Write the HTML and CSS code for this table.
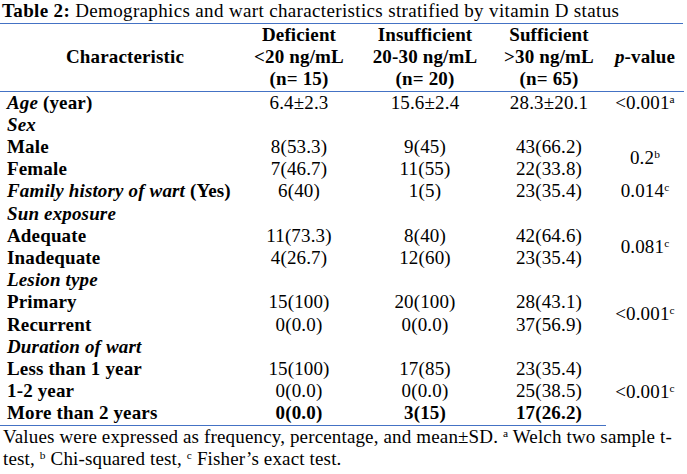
FILE: index.html
```html
<!DOCTYPE html>
<html>
<head>
<meta charset="utf-8">
<link rel="stylesheet" href="styles.css">
</head>
<body>
<div class="page">
  <div class="title"><b>Table 2:</b> Demographics and wart characteristics stratified by vitamin D status</div>
  <table class="tbl">
    <colgroup>
      <col class="c1"><col class="c2"><col class="c3"><col class="c4"><col class="c5">
    </colgroup>
    <thead>
      <tr class="head">
        <th class="hchar">Characteristic</th>
        <th>Deficient<br>&lt;20 ng/mL<br>(n= 15)</th>
        <th>Insufficient<br>20-30 ng/mL<br>(n= 20)</th>
        <th>Sufficient<br>&gt;30 ng/mL<br>(n= 65)</th>
        <th><i>p</i>-value</th>
      </tr>
    </thead>
    <tbody>
      <tr><td class="lab"><b><i>Age</i> (year)</b></td><td>6.4±2.3</td><td>15.6±2.4</td><td>28.3±20.1</td><td>&lt;0.001<sup>a</sup></td></tr>
      <tr><td class="lab"><b><i>Sex</i></b></td><td></td><td></td><td></td><td></td></tr>
      <tr><td class="lab"><b>Male</b></td><td>8(53.3)</td><td>9(45)</td><td>43(66.2)</td><td rowspan="2">0.2<sup>b</sup></td></tr>
      <tr><td class="lab"><b>Female</b></td><td>7(46.7)</td><td>11(55)</td><td>22(33.8)</td></tr>
      <tr><td class="lab"><b><i>Family history of wart</i> (Yes)</b></td><td>6(40)</td><td>1(5)</td><td>23(35.4)</td><td>0.014<sup>c</sup></td></tr>
      <tr><td class="lab"><b><i>Sun exposure</i></b></td><td></td><td></td><td></td><td></td></tr>
      <tr><td class="lab"><b>Adequate</b></td><td>11(73.3)</td><td>8(40)</td><td>42(64.6)</td><td rowspan="2">0.081<sup>c</sup></td></tr>
      <tr><td class="lab"><b>Inadequate</b></td><td>4(26.7)</td><td>12(60)</td><td>23(35.4)</td></tr>
      <tr><td class="lab"><b><i>Lesion type</i></b></td><td></td><td></td><td></td><td></td></tr>
      <tr><td class="lab"><b>Primary</b></td><td>15(100)</td><td>20(100)</td><td>28(43.1)</td><td rowspan="2">&lt;0.001<sup>c</sup></td></tr>
      <tr><td class="lab"><b>Recurrent</b></td><td>0(0.0)</td><td>0(0.0)</td><td>37(56.9)</td></tr>
      <tr><td class="lab"><b><i>Duration of wart</i></b></td><td></td><td></td><td></td><td></td></tr>
      <tr><td class="lab"><b>Less than 1 year</b></td><td>15(100)</td><td>17(85)</td><td>23(35.4)</td><td rowspan="3">&lt;0.001<sup>c</sup></td></tr>
      <tr><td class="lab"><b>1-2 year</b></td><td>0(0.0)</td><td>0(0.0)</td><td>25(38.5)</td></tr>
      <tr class="last"><td class="lab"><b>More than 2 years</b></td><td><b>0(0.0)</b></td><td><b>3(15)</b></td><td><b>17(26.2)</b></td></tr>
    </tbody>
  </table>
  <div class="note">Values were expressed as frequency, percentage, and mean±SD. <sup>a</sup> Welch two sample t-<br>test, <sup>b</sup> Chi-squared test, <sup>c</sup> Fisher’s exact test.</div>
</div>
</body>
</html>
```
FILE: styles.css
```css
html, body {
  margin: 0;
  padding: 0;
  background: #ffffff;
}
.page {
  width: 684px;
  font-family: "Liberation Serif", "Times New Roman", serif;
  font-size: 19px;
  line-height: 22px;
  letter-spacing: 0.15px;
  color: #000000;
}
.title {
  padding-left: 2px;
  height: 23px;
  width: 681px;
  border-bottom: 1px solid #4472c4;
  white-space: nowrap;
  letter-spacing: 0.35px;
}
.tbl {
  width: 684px;
  border-collapse: collapse;
  table-layout: fixed;
}
.c1 { width: 240px; }
.c2 { width: 118px; }
.c3 { width: 134px; }
.c4 { width: 114px; }
.c5 { width: 78px; }
.tbl th, .tbl td {
  padding: 0;
  text-align: center;
  vertical-align: middle;
  white-space: nowrap;
  font-weight: normal;
  line-height: 22.2px;
}
.tbl th {
  font-weight: bold;
}
.head th {
  border-bottom: 1px solid #4472c4;
}
.tbl th.hchar {
  padding-right: 0;
  padding-left: 10px;
}
.tbl td.lab {
  text-align: left;
  padding-left: 7px;
}
.last td {
  border-bottom: 1px solid #4472c4;
}
sup {
  font-size: 0.6em;
  line-height: 0;
  vertical-align: 0.55em;
}
.note {
  padding-left: 3px;
  white-space: nowrap;
}
```
